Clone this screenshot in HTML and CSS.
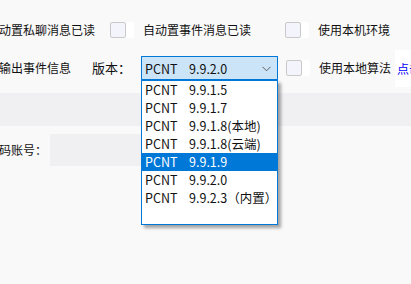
FILE: index.html
```html
<!DOCTYPE html>
<html lang="zh-CN">
<head>
<meta charset="UTF-8">
<title>设置</title>
<link rel="stylesheet" href="styles.css">
</head>
<body>
<div class="panel">
    <div class="row row-top">
        <span class="label label-first">自动置私聊消息已读</span>
        <span class="check check-a"></span>
        <span class="label label-b">自动置事件消息已读</span>
        <span class="check check-b"></span>
        <span class="label label-c">使用本机环境</span>
    </div>
    <div class="row row-mid">
        <span class="label label-out">输出事件信息</span>
        <span class="label label-ver">版本：</span>
        <div class="select">
            <span class="opt-name">PCNT</span><span class="opt-ver">9.9.2.0</span>
            <svg class="chevron" width="9" height="6" viewBox="0 0 9 6"><path d="M0.5 0.8 L4.5 4.8 L8.5 0.8" fill="none" stroke="#606060" stroke-width="1"/></svg>
            <ul class="menu">
                <li><span class="opt-name">PCNT</span><span class="opt-ver">9.9.1.5</span></li>
                <li><span class="opt-name">PCNT</span><span class="opt-ver">9.9.1.7</span></li>
                <li><span class="opt-name">PCNT</span><span class="opt-ver">9.9.1.8(本地)</span></li>
                <li><span class="opt-name">PCNT</span><span class="opt-ver">9.9.1.8(云端)</span></li>
                <li class="active"><span class="opt-name">PCNT</span><span class="opt-ver">9.9.1.9</span></li>
                <li><span class="opt-name">PCNT</span><span class="opt-ver">9.9.2.0</span></li>
                <li><span class="opt-name">PCNT</span><span class="opt-ver">9.9.2.3（内置）</span></li>
            </ul>
        </div>
        <span class="check check-c"></span>
        <span class="label label-d">使用本地算法</span>
        <a class="link">点击</a>
    </div>
    <div class="band"></div>
    <div class="row row-bottom">
        <span class="label label-first">号码账号：</span>
        <div class="field"></div>
    </div>
</div>
</body>
</html>
```

FILE: styles.css
```css
html, body {
    margin: 0;
    padding: 0;
    background-color: #f9f9f9;
    overflow: hidden;
}
body {
    font-family: "Noto Sans CJK SC", "Noto Sans", sans-serif;
    font-size: 12px;
    color: #111;
}
.panel {
    box-sizing: border-box;
    width: 411px;
    height: 284px;
    padding-top: 18px;
    overflow: hidden;
}
.row {
    display: flex;
    align-items: center;
    white-space: nowrap;
}
.row-top {
    height: 24px;
}
.row-mid {
    height: 24px;
    margin-top: 14px;
}
.row-bottom {
    height: 32px;
    margin-top: 8px;
}
.label {
    line-height: 16px;
}
.label-first {
    margin-left: -13px;
}
.check {
    width: 14px;
    height: 14px;
    border: 1px solid #c9c9c9;
    border-radius: 2px;
    background-color: #f4f5fc;
    box-shadow: 8px 0 0 #fff;
    flex: none;
}
.check-a {
    margin-left: 15px;
}
.label-b {
    margin-left: 17px;
}
.check-b {
    margin-left: 34px;
}
.label-c {
    margin-left: 17px;
}
.label-out {
    margin-left: -1px;
}
.label-ver {
    margin-left: 21px;
    font-size: 13px;
}
.select {
    position: relative;
    box-sizing: border-box;
    width: 137px;
    height: 24px;
    margin-left: 10px;
    padding-left: 3px;
    display: flex;
    align-items: center;
    background-color: #cce4f7;
    border: 1px solid #0078d7;
    flex: none;
    font-size: 12.5px;
}
.opt-name {
    display: inline-block;
    width: 44px;
}
.chevron {
    position: absolute;
    right: 6px;
    top: 9px;
}
.menu {
    position: absolute;
    left: -1px;
    top: 23px;
    box-sizing: border-box;
    width: 137px;
    height: 145px;
    margin: 0;
    padding: 0 0 18px;
    list-style: none;
    background-color: #fff;
    border: 1px solid #0078d7;
    box-shadow: 3px 3px 3px rgba(0, 0, 0, 0.35);
    z-index: 2;
}
.menu li {
    height: 18px;
    line-height: 18px;
    padding-left: 3px;
}
.menu li.active {
    background-color: #0078d7;
    color: #fff;
}
.check-c {
    margin-left: 8px;
}
.label-d {
    margin-left: 17px;
}
.link {
    margin-left: 4px;
    padding: 10px 2px;
    color: #0000ff;
    background-color: #fff;
}
.band {
    height: 33px;
    margin-top: 13px;
    background-color: #f0eff2;
}
.field {
    width: 120px;
    height: 32px;
    margin-left: 3px;
    background-color: #f0eff2;
}
```
